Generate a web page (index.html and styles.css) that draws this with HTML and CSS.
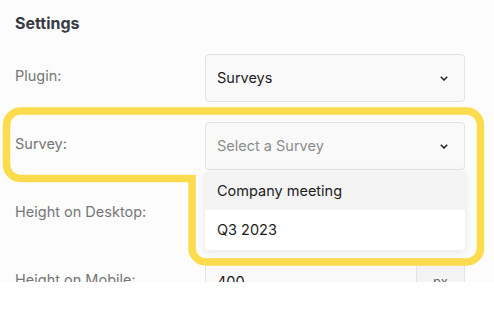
FILE: index.html
```html
<!DOCTYPE html>
<html lang="en">
<head>
<meta charset="utf-8">
<title>Settings</title>
<link rel="stylesheet" href="styles.css">
</head>
<body>
<div class="page">
  <h2 class="title">Settings</h2>
  <div class="form">
    <div class="label">Plugin:</div>
    <div class="field">
      <div class="select">
        <span class="value">Surveys</span>
        <svg class="chev" width="8" height="5" viewBox="0 0 8 5"><path d="M0.8 0.8 L4 4 L7.2 0.8" fill="none" stroke="#1f1f1f" stroke-width="1.5"/></svg>
      </div>
    </div>

    <div class="label">Survey:</div>
    <div class="field">
      <div class="select">
        <span class="placeholder">Select a Survey</span>
        <svg class="chev" width="8" height="5" viewBox="0 0 8 5"><path d="M0.8 0.8 L4 4 L7.2 0.8" fill="none" stroke="#1f1f1f" stroke-width="1.5"/></svg>
      </div>
      <ul class="menu">
        <li class="option active">Company meeting</li>
        <li class="option">Q3 2023</li>
      </ul>
    </div>

    <div class="label">Height on Desktop:</div>
    <div class="field">
      <div class="input-group">
        <span class="input">400</span>
        <span class="addon">px</span>
      </div>
    </div>

    <div class="label">Height on Mobile:</div>
    <div class="field">
      <div class="input-group">
        <span class="input">400</span>
        <span class="addon">px</span>
      </div>
    </div>
  </div>

  <svg class="highlight" width="494" height="282" viewBox="0 0 494 282">
    <path d="M20 111 H466.5 A14 14 0 0 1 480.5 125 V248 A14 14 0 0 1 466.5 262 H206 A14 14 0 0 1 192 248 V178.5 H20.5 A14 14 0 0 1 6.5 164.5 V125 A14 14 0 0 1 20 111 Z" fill="none" stroke="#fbdc4d" stroke-width="7.5" stroke-linejoin="miter"/>
  </svg>
</div>
</body>
</html>
```

FILE: styles.css
```css
html, body {
  margin: 0;
  padding: 0;
  background: #ffffff;
}

.page {
  position: relative;
  height: 282px;
  overflow: hidden;
  background: #fcfcfc;
  font-family: Inter, "Noto Sans", "Liberation Sans", sans-serif;
  padding: 13px 29px 0 15px;
  box-sizing: border-box;
}

.title {
  margin: 0;
  font-size: 16px;
  line-height: 20px;
  font-weight: 650;
  color: #383b41;
}

.form {
  margin-top: 21px;
  display: grid;
  grid-template-columns: 190px 260px;
  grid-auto-rows: 48px;
  row-gap: 20px;
}

.label {
  padding-top: 12px;
  font-size: 14.5px;
  line-height: 20px;
  color: #767676;
}

.field {
  position: relative;
}

.select,
.input-group {
  height: 48px;
  box-sizing: border-box;
  border: 1px solid #e3e3e3;
  border-radius: 4px;
  background: #f9f9f9;
  display: flex;
  align-items: center;
  font-size: 14.5px;
  line-height: 20px;
}

.select {
  justify-content: space-between;
  padding: 0 16px 0 11px;
}

.value,
.input {
  color: #1c1c1c;
}

.placeholder {
  color: #8c8c8c;
}

.chev {
  display: block;
}

.input {
  flex: 1;
  padding-left: 11px;
}

.addon {
  width: 47px;
  align-self: stretch;
  display: flex;
  align-items: center;
  justify-content: center;
  border-left: 1px solid #e3e3e3;
  background: #f3f3f3;
  color: #6b6b6b;
  font-size: 13px;
  border-radius: 0 4px 4px 0;
}

.menu {
  position: absolute;
  top: 49px;
  left: 0;
  right: 0;
  margin: 0;
  padding: 0;
  list-style: none;
  background: #ffffff;
  border-radius: 4px;
  box-shadow: 0 2px 8px rgba(0, 0, 0, 0.09);
  overflow: hidden;
  z-index: 2;
}

.option {
  height: 40px;
  display: flex;
  align-items: center;
  padding-left: 12px;
  font-size: 14.5px;
  line-height: 20px;
  color: #1c1c1c;
}

.option.active {
  height: 39px;
  background: #f3f3f3;
}

.highlight {
  position: absolute;
  left: 0;
  top: 0;
  z-index: 3;
  pointer-events: none;
}
```
